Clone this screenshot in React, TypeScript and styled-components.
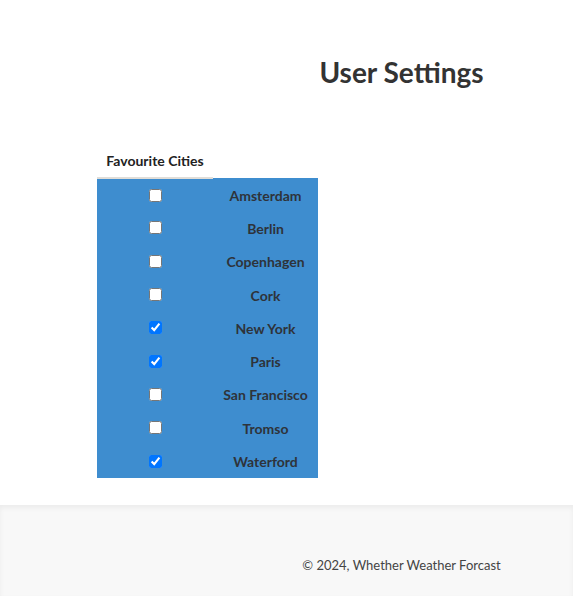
import React from "react";
import styled, { createGlobalStyle } from "styled-components";

const Global = createGlobalStyle`
  html, body { margin: 0; padding: 0; background: #fff; }
  body { font-family: Lato, "Open Sans", sans-serif; color: #333; }
`;

const Page = styled.div`
  display: flex;
  flex-direction: column;
  min-height: 596px;
`;

const Main = styled.main`
  height: 505px;
  display: flex;
  flex-direction: column;
`;

const TitleBar = styled.div`
  padding: 53px 0 0 230px;
  text-align: center;
`;

const Title = styled.h1`
  margin: 0;
  font-size: 28px;
  line-height: 38px;
  font-weight: 700;
  color: #333;
`;

const Table = styled.table`
  margin: 50px 0 0 97px;
  border-collapse: collapse;
  width: 221px;
`;

const HeadCell = styled.th`
  height: 34px;
  width: 116px;
  padding: 2px 0 0;
  font-size: 14px;
  font-weight: 700;
  color: #222;
  text-align: center;
  vertical-align: middle;
  border-bottom: 2px solid #e0ddd8;
`;

const EmptyHead = styled.th`
  padding: 0;
  border: none;
`;

const Body = styled.tbody`
  background: #3e8dcf;
`;

const Row = styled.tr`
  height: 33.3px;
`;

const CheckCell = styled.td`
  width: 116px;
  padding: 0;
  line-height: 0;
  font-size: 0;
  vertical-align: middle;
`;

const Box = styled.input`
  display: block;
  margin: 0 auto;
  width: 13px;
  height: 13px;
`;

const CityCell = styled.td`
  padding: 1px 0 0;
  text-align: center;
  vertical-align: middle;
  font-size: 14px;
  font-weight: 700;
  color: #2e333a;
`;

const Footer = styled.footer`
  flex: 1;
  background: #f8f8f8;
  box-shadow: inset 0 3px 5px rgba(0, 0, 0, 0.05);
  padding: 52px 0 0 230px;
  text-align: center;
  font-size: 13px;
  color: #444;
`;

const cities: [string, boolean][] = [
  ["Amsterdam", false],
  ["Berlin", false],
  ["Copenhagen", false],
  ["Cork", false],
  ["New York", true],
  ["Paris", true],
  ["San Francisco", false],
  ["Tromso", false],
  ["Waterford", true],
];

export default function App() {
  return (
    <Page>
      <Global />
      <Main>
        <TitleBar>
          <Title>User Settings</Title>
        </TitleBar>
        <Table>
          <thead>
            <tr>
              <HeadCell>Favourite Cities</HeadCell>
              <EmptyHead />
            </tr>
          </thead>
          <Body>
            {cities.map(([name, checked]) => (
              <Row key={name}>
                <CheckCell>
                  <Box type="checkbox" defaultChecked={checked} />
                </CheckCell>
                <CityCell>{name}</CityCell>
              </Row>
            ))}
          </Body>
        </Table>
      </Main>
      <Footer>© 2024, Whether Weather Forcast</Footer>
    </Page>
  );
}
